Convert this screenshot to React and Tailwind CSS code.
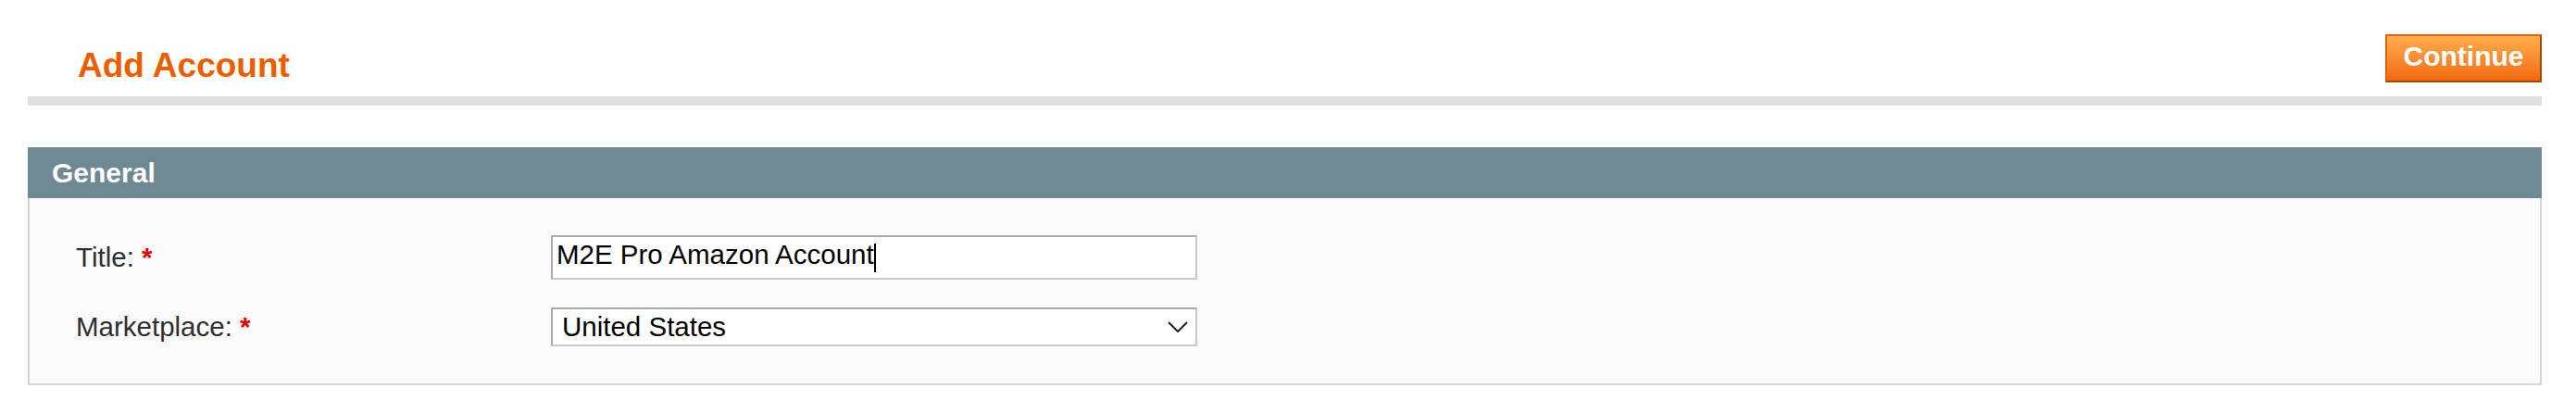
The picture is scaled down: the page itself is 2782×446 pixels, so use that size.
import React from "react";

const Required = () => <span className="font-bold text-[#e00000]">*</span>;

const App = () => {
  return (
    <div className="min-h-[446px] bg-white pl-[30px] pr-[37px] font-['Liberation_Sans',Arial,sans-serif]">
      {/* page header */}
      <div className="flex h-[104px] items-start justify-between">
        <h3 className="ml-[54px] mt-[52px] text-[37px] font-bold leading-[37px] text-[#eb5e00]">
          Add Account
        </h3>
        <button className="mt-[37px] flex h-[52px] w-[169px] items-center justify-center border-2 border-t-[#e56204] border-l-[#e56204] border-r-[#a94500] border-b-[#a94500] bg-gradient-to-b from-[#ffad4b] to-[#f1690a] pb-[4px] text-[30px] font-bold leading-none text-white">
          Continue
        </button>
      </div>
      <div className="h-[10px] bg-[#dfdfdf]" />

      {/* general fieldset */}
      <div className="mt-[45px]">
        <div className="flex h-[55px] items-center bg-[#6f8992] pl-[26px] text-[30px] font-bold text-white">
          General
        </div>
        <div className="border-2 border-t-0 border-[#d6d6d6] bg-[#fafafa] pb-[39px] pl-[50px] pt-[40px]">
          <div className="grid grid-cols-[513px_698px] items-center gap-y-[29px] text-[29.5px] text-[#2f2f2f]">
            <label>
              Title: <Required />
            </label>
            <div className="flex h-[48px] items-center border-2 border-[#c8c8c8] border-l-[#aaaaaa] border-t-[#aaaaaa] bg-white pb-[5px] pl-[4px] text-black">
              <span>M2E Pro Amazon Account</span>
              <span className="mt-[6px] h-[31px] w-[2px] bg-black" />
            </div>

            <label>
              Marketplace: <Required />
            </label>
            <div className="flex h-[42px] items-center justify-between border-2 border-[#c8c8c8] border-l-[#aaaaaa] border-t-[#aaaaaa] bg-white pl-[10px] pr-[8px] text-black">
              <span>United States</span>
              <svg width="22" height="12" viewBox="0 0 22 12" fill="none">
                <path d="M1 1 L11 11 L21 1" stroke="#222" strokeWidth="2" />
              </svg>
            </div>
          </div>
        </div>
      </div>
    </div>
  );
};

export default App;
